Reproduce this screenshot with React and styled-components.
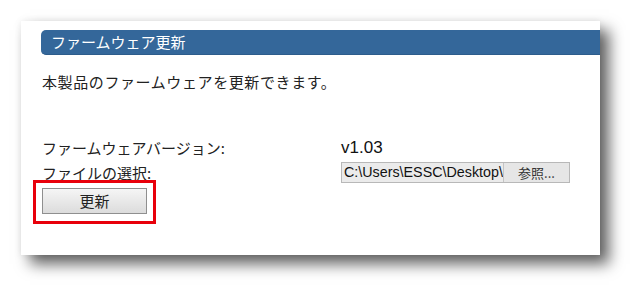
import React from 'react'
import styled, { createGlobalStyle } from 'styled-components'

const GlobalStyle = createGlobalStyle`
  html, body {
    margin: 0;
    padding: 0;
    background: #fff;
  }
  body {
    font-family: "Noto Sans CJK JP", "Liberation Sans", sans-serif;
    color: #222;
  }
`

const Page = styled.div`
  width: 642px;
  height: 297px;
  padding: 21px 0 0 21px;
  box-sizing: border-box;
  overflow: hidden;
`

const Card = styled.section`
  width: 579px;
  height: 234px;
  box-sizing: border-box;
  padding: 9px 0 0 20px;
  background: #fff;
  box-shadow: 9px 9px 14px rgba(0, 0, 0, 0.62), 0 0 7px rgba(0, 0, 0, 0.08);
`

const Header = styled.h2`
  margin: 0;
  height: 25px;
  padding-left: 10px;
  background: #34679a;
  border-bottom: 1px solid #2d5c8b;
  box-sizing: border-box;
  border-radius: 5px 0 0 5px;
  color: #fff;
  font-size: 15px;
  font-weight: normal;
  line-height: 24px;
`

const Intro = styled.p`
  margin: 17px 0 0 1px;
  font-size: 15px;
  letter-spacing: 0.6px;
  line-height: 20px;
`

const Form = styled.div`
  margin-top: 43px;
  margin-left: 1px;
  display: grid;
  grid-template-columns: 299px auto;
  grid-auto-rows: 25px;
  align-items: center;
`

const Label = styled.span`
  font-size: 15px;
  line-height: 20px;
`

const Version = styled.span`
  font-family: "Liberation Sans", Arial, sans-serif;
  font-size: 17px;
  color: #111;
`

const FileField = styled.div`
  display: flex;
  width: 229px;
  height: 21px;
  border: 1px solid #b8b8b8;
  box-sizing: border-box;
  background: #ebebeb;
`

const PathBox = styled.span`
  width: 161px;
  padding-left: 2px;
  overflow: hidden;
  white-space: nowrap;
  font-family: "Liberation Sans", Arial, sans-serif;
  font-size: 14.3px;
  line-height: 19px;
  color: #111;
  box-sizing: border-box;
`

const BrowseButton = styled.span`
  flex: 1;
  border-left: 1px solid #c4c4c4;
  background: #e6e6e6;
  text-align: center;
  font-size: 13px;
  line-height: 19px;
  color: #333;
`

const Highlight = styled.div`
  display: inline-block;
  margin: -5px 0 0 -8px;
  padding: 5px 6px 7px 6px;
  border: 3px solid #e8000b;
`

const UpdateButton = styled.button`
  display: block;
  width: 105px;
  height: 26px;
  padding: 0;
  border: 1px solid #8f8f8f;
  background: linear-gradient(#f5f5f5, #dcdcdc);
  font-family: "Noto Sans CJK JP", sans-serif;
  font-size: 15px;
  color: #222;
  line-height: 24px;
`

const App = () => {
  return (
    <Page>
      <GlobalStyle />
      <Card>
        <Header>ファームウェア更新</Header>
        <Intro>本製品のファームウェアを更新できます。</Intro>
        <Form>
          <Label>ファームウェアバージョン:</Label>
          <Version>v1.03</Version>
          <Label>ファイルの選択:</Label>
          <FileField>
            <PathBox>C:\Users\ESSC\Desktop\</PathBox>
            <BrowseButton>参照...</BrowseButton>
          </FileField>
        </Form>
        <Highlight>
          <UpdateButton>更新</UpdateButton>
        </Highlight>
      </Card>
    </Page>
  )
}

export default App
